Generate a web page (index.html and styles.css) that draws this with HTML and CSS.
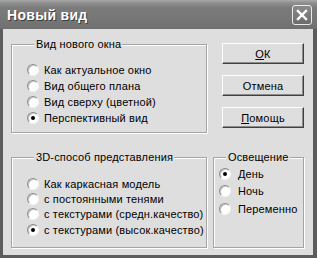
FILE: index.html
```html
<!DOCTYPE html>
<html lang="ru">
<head>
  <meta charset="UTF-8">
  <title>Новый вид</title>
  <link rel="stylesheet" href="styles.css">
</head>
<body>
  <div class="window">
    <div class="titlebar">
      <span class="title">Новый вид</span>
      <span class="close">
        <svg width="14" height="14" viewBox="0 0 14 14"><path d="M3 3 L11 11 M11 3 L3 11" stroke="#fff" stroke-width="2.4" stroke-linecap="square"/></svg>
      </span>
    </div>
    <div class="client">
      <div class="row">
        <fieldset class="group g-view">
          <legend>Вид нового окна</legend>
          <div class="opt"><span class="radio"></span>Как актуальное окно</div>
          <div class="opt"><span class="radio"></span>Вид общего плана</div>
          <div class="opt"><span class="radio"></span>Вид сверху (цветной)</div>
          <div class="opt"><span class="radio on"></span>Перспективный вид</div>
        </fieldset>
        <div class="buttons">
          <div class="btn"><u>О</u>К</div>
          <div class="btn">Отмена</div>
          <div class="btn"><u>П</u>омощь</div>
        </div>
      </div>
      <div class="row row2">
        <fieldset class="group g-mode">
          <legend>3D-способ представления</legend>
          <div class="opt"><span class="radio"></span>Как каркасная модель</div>
          <div class="opt"><span class="radio"></span>с постоянными тенями</div>
          <div class="opt"><span class="radio"></span>с текстурами (средн.качество)</div>
          <div class="opt"><span class="radio on"></span>с текстурами (высок.качество)</div>
        </fieldset>
        <fieldset class="group g-light">
          <legend>Освещение</legend>
          <div class="opt"><span class="radio on"></span>День</div>
          <div class="opt"><span class="radio"></span>Ночь</div>
          <div class="opt"><span class="radio"></span>Переменно</div>
        </fieldset>
      </div>
    </div>
  </div>
</body>
</html>
```

FILE: styles.css
```css
body {
  margin: 0;
  background: #3a3a3a;
  font-family: "Liberation Sans", Arial, sans-serif;
  font-size: 11px;
  color: #000;
}
.window {
  width: 317px;
  height: 258px;
  background: #5c5c5c;
  display: flex;
  flex-direction: column;
  overflow: hidden;
}
.titlebar {
  height: 29px;
  display: flex;
  align-items: center;
  justify-content: space-between;
  padding: 0 5px 0 7px;
  box-sizing: border-box;
  background: linear-gradient(#a9a9a9 0px, #8e8e8e 3px, #7b7b7b 8px, #767676 20px, #6f6f6f 29px);
}
.title {
  color: #fff;
  font-weight: bold;
  font-size: 14px;
  letter-spacing: 0.3px;
  text-shadow: 1px 1px 0 #3c3c3c;
  margin-top: 1px;
}
.close {
  width: 20px;
  height: 20px;
  box-sizing: border-box;
  border: 1px solid #eaeaea;
  border-radius: 3px;
  background: linear-gradient(#8a8a8a, #6c6c6c);
  display: flex;
  align-items: center;
  justify-content: center;
  margin-top: 1px;
}
.client {
  flex: 1;
  margin: 0 4px 3px 3px;
  background: #dedede;
  padding: 9px 0 0 8px;
}
.row {
  display: flex;
}
.row2 {
  margin-top: 18px;
}
.group {
  margin: 0;
  padding: 0;
  border: 1px solid #a4a4a4;
  box-shadow: 1px 1px 0 #fff, inset 1px 1px 0 #fff;
  box-sizing: border-box;
  letter-spacing: 0.15px;
}
.group legend {
  margin-left: 7px;
  padding: 0 1px 0 2px;
  background: #dedede;
  line-height: 13px;
}
.g-view {
  width: 196px;
  height: 95px;
  padding: 11px 0 0 15px;
}
.g-mode {
  width: 196px;
  height: 97px;
  padding: 12px 0 0 15px;
}
.g-light {
  width: 91px;
  height: 97px;
  margin-left: 6px;
  padding: 1px 0 0 5px;
}
.opt {
  display: flex;
  align-items: center;
  height: 16px;
  white-space: nowrap;
}
.g-mode .opt {
  height: 15.4px;
}
.g-light .opt {
  height: 17.5px;
}
.radio {
  width: 12px;
  height: 12px;
  box-sizing: border-box;
  border-radius: 50%;
  border: 1px solid;
  border-color: #8c8c8c #f4f4f4 #f4f4f4 #8c8c8c;
  background: #fff;
  box-shadow: inset 1px 1px 0 #c4c4c4;
  margin-right: 5px;
  display: flex;
  align-items: center;
  justify-content: center;
  flex: none;
}
.g-light .radio {
  margin-right: 7px;
}
.radio.on::after {
  content: "";
  width: 4px;
  height: 4px;
  border-radius: 50%;
  background: #000;
}
.buttons {
  margin-left: 15px;
  padding-top: 5px;
  display: flex;
  flex-direction: column;
  gap: 11px;
}
.btn {
  width: 82px;
  height: 21px;
  box-sizing: border-box;
  border: 1px solid;
  border-color: #fff #404040 #404040 #fff;
  box-shadow: inset -1px -1px 0 #8c8c8c;
  display: flex;
  align-items: center;
  justify-content: center;
  letter-spacing: 0.2px;
}
.btn u {
  text-underline-offset: 1px;
}
```
